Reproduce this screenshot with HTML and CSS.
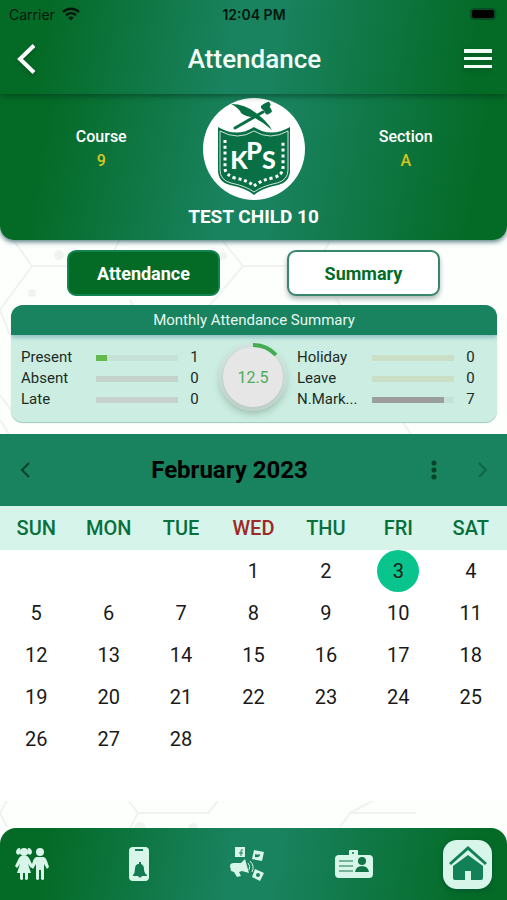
FILE: index.html
```html
<!DOCTYPE html>
<html lang="en">
<head>
  <meta charset="UTF-8">
  <title>Attendance</title>
  <meta name="viewport" content="width=device-width,initial-scale=1">
  <link rel="stylesheet" href="styles.css">
</head>
<body>

<!-- HEADER -->
<header class="header">
  <div class="statusbar">
    <div class="carrier">
      <span>Carrier</span>
      <svg width="18" height="14" viewBox="0 0 18 14" fill="none" stroke="#03170d">
        <path d="M1 5C5.500 .7 12.500 .7 17 5" stroke-width="2.500"/>
        <path d="M4 8.300C7 5.500 11 5.500 14 8.300" stroke-width="2.400"/>
        <path d="M6.300 10.600Q9 8.300 11.700 10.600L9 13.500Z" fill="#03170d" stroke="none"/>
      </svg>
    </div>
    <span class="clock">12:04 PM</span>
    <svg class="battery" width="30" height="14" viewBox="0 0 30 14">
      <rect x="1" y="1" width="26" height="12" rx="4" fill="#064d25"/>
      <rect x="3" y="3" width="22" height="8" rx="2" fill="#000"/>
      <path d="M28 5q2 2 0 4z" fill="#064d25"/>
    </svg>
  </div>
  <div class="titlebar">
    <button class="icon-btn" type="button" aria-label="Back">
      <svg width="19" height="30" viewBox="0 0 19 30" fill="none" stroke="#fff" stroke-width="4"><path d="M17 1.500L3 15L17 28.500"/></svg>
    </button>
    <h1>Attendance</h1>
    <button class="icon-btn" type="button" aria-label="Menu">
      <svg width="28" height="20" viewBox="0 0 28 20" fill="#f1fbf5"><path d="M0 0h28v4H0zM0 8h28v3H0zM0 16h28v3H0z"/></svg>
    </button>
  </div>
</header>

<!-- STUDENT -->
<section class="student">
  <div class="fact"><span>Course</span><b>9</b></div>
  <div class="child">
    <svg class="logo" width="102" height="102" viewBox="0 0 102 102">
      <circle cx="51" cy="51" r="51" fill="#fff"/>
      <!-- quill and hammer -->
      <path d="M28 6Q42 6 53 15Q64 23 69 32Q60 24 50 19Q43 19 38 15Q36 10 28 6Z" fill="#087044"/>
      <path d="M32 30L60 14" stroke="#087044" stroke-width="3" stroke-linecap="round"/>
      <rect x="60" y="5" width="7" height="11" rx="2" transform="rotate(-30 64 10)" fill="#087044"/>
      <rect x="59" y="5" width="10" height="5" rx="2" transform="rotate(-30 64 10)" fill="#087044"/>
      <!-- shield -->
      <path d="M15 29Q34 40 51 29Q68 40 87 29V72Q87 84 75 87Q59 90 51 97Q43 90 27 87Q15 84 15 72Z" fill="#087044"/>
      <path d="M17 33Q35 43 51 33Q67 43 85 33V72Q85 82 74 85Q59 88 51 94Q43 88 28 85Q17 82 17 72Z" fill="none" stroke="#fff" stroke-width=".8"/>
      <path d="M22 42V71Q23 77 32 80Q44 82 51 88Q58 82 70 80Q79 77 80 71V42" fill="none" stroke="#fff" stroke-width="3" stroke-dasharray="3 2.800"/>
      <g fill="#fff" font-family="Lato, sans-serif" font-weight="900" font-size="25" text-anchor="middle">
        <text x="36" y="71">K</text><text x="51" y="62">P</text><text x="66" y="71">S</text>
      </g>
    </svg>
    <h2>TEST CHILD 10</h2>
  </div>
  <div class="fact"><span>Section</span><b>A</b></div>
</section>

<main>
  <div class="tabs">
    <button class="tab active" type="button">Attendance</button>
    <button class="tab" type="button">Summary</button>
  </div>

  <!-- MONTHLY SUMMARY -->
  <section class="summary">
    <h3>Monthly Attendance Summary</h3>
    <div class="summary-body">
      <div class="stats">
        <span>Present</span><div class="bar"><i class="present" style="width:13%"></i></div><span class="num">1</span>
        <span>Absent</span><div class="bar gray"></div><span class="num">0</span>
        <span>Late</span><div class="bar gray"></div><span class="num">0</span>
      </div>
      <div class="dial">
        <svg width="60" height="60" viewBox="0 0 60 60" fill="none" stroke="#42ac50" stroke-width="4"><path d="M30 -2A32 32 0 0 1 53 8"/></svg>
        <span>12.5</span>
      </div>
      <div class="stats">
        <span>Holiday</span><div class="bar sand"></div><span class="num">0</span>
        <span>Leave</span><div class="bar sand"></div><span class="num">0</span>
        <span>N.Mark...</span><div class="bar"><i class="unmarked" style="width:88%"></i></div><span class="num">7</span>
      </div>
    </div>
  </section>

  <!-- CALENDAR -->
  <section class="calendar">
    <div class="month">
      <button class="icon-btn" type="button" aria-label="Previous month">
        <svg width="10" height="16" viewBox="0 0 10 16" fill="none" stroke="#09432a" stroke-width="2"><path d="M9 1L2 8L9 15"/></svg>
      </button>
      <h2>February 2023</h2>
      <button class="icon-btn" type="button" aria-label="More">
        <svg width="6" height="20" viewBox="0 0 6 20" fill="#09432a"><circle cx="3" cy="3" r="2.500"/><circle cx="3" cy="10" r="2.500"/><circle cx="3" cy="17" r="2.500"/></svg>
      </button>
      <button class="icon-btn" type="button" aria-label="Next month">
        <svg width="10" height="16" viewBox="0 0 10 16" fill="none" stroke="#106545" stroke-width="2"><path d="M1 1L8 8L1 15"/></svg>
      </button>
    </div>
    <table class="days">
      <thead>
        <tr><th>SUN</th><th>MON</th><th>TUE</th><th class="off">WED</th><th>THU</th><th>FRI</th><th>SAT</th></tr>
      </thead>
      <tbody>
        <tr><td></td><td></td><td></td><td>1</td><td>2</td><td><span class="today">3</span></td><td>4</td></tr>
        <tr><td>5</td><td>6</td><td>7</td><td>8</td><td>9</td><td>10</td><td>11</td></tr>
        <tr><td>12</td><td>13</td><td>14</td><td>15</td><td>16</td><td>17</td><td>18</td></tr>
        <tr><td>19</td><td>20</td><td>21</td><td>22</td><td>23</td><td>24</td><td>25</td></tr>
        <tr><td>26</td><td>27</td><td>28</td><td></td><td></td><td></td><td></td></tr>
      </tbody>
    </table>
  </section>
</main>

<!-- honeycomb behind the page -->
<svg class="pattern" width="507" height="900" viewBox="0 0 507 900" fill="none" stroke="#eff2f0" stroke-width="2">
  <path d="M12 238L32 266L0 310L-20 350M32 266H80M120 240L108 260M222 240L243 266L210 305M243 266H290M330 240L320 260M0 310L10 335M0 395L11 410M130 300L145 325M335 297L350 320M400 418L412 436M0 420L9 434"/>
  <path d="M7 801L0 813L7 827M129 801L138 813H208L218 801M138 813L130 828M340 827L350 813H416M350 813L376 799"/>
  <g fill="#f0f4f1" stroke="none"><circle cx="59" cy="255" r="5"/><circle cx="32" cy="293" r="4"/><circle cx="223" cy="256" r="4"/><circle cx="140" cy="828" r="6"/><circle cx="193" cy="828" r="5"/></g>
</svg>

<!-- BOTTOM NAV -->
<nav class="bottom-nav">
  <a href="#" aria-label="Children">
    <svg width="36" height="34" viewBox="0 0 36 34" fill="#d8f5e9">
      <circle cx="10" cy="5" r="4"/><path d="M6 1Q2 1 2 6L4 8L7 6ZM14 1Q18 1 18 6L16 8L13 6Z"/>
      <path d="M7 9H13Q15 10 16 13L19 19L17 21L14 17L17 26H14V32Q12 34 11 32V26H9V32Q8 34 6 32V26H3L6 17L3 21L1 19L4 13Q5 10 7 9Z"/>
      <circle cx="26" cy="5" r="4"/><path d="M22 10H30Q32 11 33 14L35 20L33 22L30 17V32Q29 34 27 32V23H25V32Q24 34 22 32V17L19 22L17 20L19 14Q20 11 22 10Z"/>
    </svg>
  </a>
  <a href="#" aria-label="Notifications">
    <svg width="20" height="34" viewBox="0 0 20 34">
      <rect width="20" height="34" rx="4" fill="#d8f5e9"/><path d="M6 3h8" stroke="#137a51" stroke-width="2"/>
      <path d="M4 28Q6 26 6 22Q6 17 10 17V15H12V17Q15 18 15 22Q15 26 18 28V29H4ZM9 29h4q-2 3-4 0" fill="#137a51"/>
    </svg>
  </a>
  <a href="#" aria-label="Social media">
    <svg width="36" height="36" viewBox="0 0 36 36" fill="#d8f5e9">
      <path d="M6 1H16V11H6ZM25 4L35 6L33 15L23 13ZM26 23L35 27L31 35L23 31Z"/>
      <path d="M12 10V5Q12 3 14 4M10 7h4" fill="none" stroke="#177f59"/>
      <path d="M1 20Q1 17 5 17L12 17L16 13L20 27L13 25L10 26L12 30L8 31L5 26L2 25Z"/>
      <path d="M19 17Q22 20 20 24M21 15Q26 20 23 26" fill="none" stroke="#d8f5e9"/>
      <circle cx="29" cy="29" r="2" fill="#177f59"/><path d="M26 8Q29 9 31 8Q31 12 26 11Z" fill="#177f59"/>
    </svg>
  </a>
  <a href="#" aria-label="Student card">
    <svg width="38" height="30" viewBox="0 0 38 30">
      <rect y="6" width="38" height="23" rx="4" fill="#d8f5e9"/><rect x="14" y="1" width="9" height="7" rx="1" fill="#d8f5e9"/>
      <path d="M4 12h14M4 17h14M4 22h14" stroke="#107447"/><circle cx="27" cy="12" r="4" fill="#107447"/><path d="M20 23q1-6 7-6t7 6z" fill="#107447"/><circle cx="18" cy="4" r="1" fill="#107447"/>
    </svg>
  </a>
  <a href="#" class="home" aria-label="Home">
    <svg width="38" height="36" viewBox="0 0 38 36" fill="#128158"><path d="M0 17L19 0L38 17L36 19L19 4L2 19ZM4 20L19 9L34 20V32Q34 34 32 34H22V25H16V34H6Q4 34 4 32Z"/></svg>
  </a>
</nav>

</body>
</html>
```
FILE: styles.css
```css
* { box-sizing: border-box; }
body { margin: 0; min-height: 100vh; display: flex; flex-direction: column; font-family: Roboto, sans-serif; background: #fdfffd; color: #1c2b25; }
h1, h2, h3 { margin: 0; }
svg { display: block; }
button { font-family: inherit; }
.header, .student, .bottom-nav { background: linear-gradient(100deg, #046b27 10%, #19825e 45%, #19825e 55%, #046b27 92%); }
.header { height: 94px; position: relative; box-shadow: 0 2px 6px rgba(0,50,25,0.6); }
.statusbar { display: grid; grid-template-columns: 1fr auto 1fr; align-items: center; height: 28px; padding: 0 8px 0 9px; font-family: Inter, sans-serif; font-size: 14px; color: #03170d; }
.carrier { display: flex; align-items: center; gap: 7px; }
.clock { font-weight: 600; }
.battery { justify-self: end; }
.titlebar { display: flex; align-items: center; justify-content: space-between; height: 62px; padding: 0 15px 0 17px; }
.titlebar h1 { padding-left: 9px; font-size: 26px; font-weight: 500; color: #f4fcf8; }
.icon-btn { border: 0; padding: 0; background: none; }
.titlebar svg { filter: drop-shadow(0 2px 2px rgba(0,50,20,0.4)); }

.student { display: grid; grid-template-columns: 1fr 150px 1fr; height: 146px; border-radius: 0 0 14px 14px; box-shadow: 0 2px 5px #557e82; color: #fff; }
.fact { display: flex; flex-direction: column; align-items: center; gap: 5px; padding-top: 33px; font-size: 16px; line-height: 19px; font-weight: 500; }
.fact:first-child { padding-left: 24px; }
.fact:last-child { padding-right: 24px; }
.fact b { color: #d7c520; font-weight: 500; }
.child { display: flex; flex-direction: column; align-items: center; padding-top: 4px; }
.child h2 { margin-top: 6px; font-size: 19px; line-height: 22px; font-weight: 700; }

.tabs { display: flex; justify-content: center; gap: 67px; padding: 10px 0 9px; }
.tab { width: 153px; height: 46px; border: 2px solid #38876a; border-radius: 9px; background: #fff; color: #046b27; font-size: 18px; font-weight: 700; box-shadow: 0 3px 5px #aab8b3; }
.tab.active { background: #046b27; color: #fff; border-color: #13834f; box-shadow: none; }

.summary { margin: 0 10px 12px 11px; height: 117px; overflow: hidden; border-radius: 12px; background: #cceee2; box-shadow: 0 1px 1px #9bc7b8; }
.summary h3 { height: 30px; background: #19825e; color: #e7f8f1; font-size: 15px; line-height: 31px; font-weight: 400; text-align: center; box-shadow: 0 2px 5px #83b5bb; }
.summary-body { display: grid; grid-template-columns: 188px 1fr 188px; padding: 12px 12px 0 10px; }
.stats { display: grid; grid-template-columns: 75px 82px 1fr; align-content: start; align-items: center; font-size: 15px; line-height: 21px; }
.bar { height: 6px; background: #c6e2d8; }
.bar.gray { background: #c5d3cc; }
.bar.sand { background: #cbdfc6; }
.bar i { display: block; height: 6px; }
.present { background: #65b94a; }
.unmarked { background: #9b9e9c; }
.num { text-align: center; padding-left: 2px; }
.dial { display: grid; place-items: center; justify-self: center; width: 60px; height: 60px; border-radius: 50%; background: #e6e6e6; box-shadow: 0 0 0 4px rgba(222,228,225,0.5), 0 4px 9px 2px #93b3a5; color: #4eac5a; font-size: 16px; }
.dial svg, .dial span { grid-area: 1 / 1; }
.dial svg { overflow: visible; }

.calendar { background: #fff; padding-bottom: 41px; }
.month { display: grid; grid-template-columns: 50px 1fr 50px 48px; align-items: center; justify-items: center; height: 72px; background: #19825e; }
.month h2 { font-size: 24px; font-weight: 700; color: #000; }
.days { width: 100%; border-collapse: collapse; table-layout: fixed; text-align: center; }
.days th { height: 44px; padding: 0; background: #d6f4e9; color: #08703d; font-size: 20px; font-weight: 500; }
.days th.off { color: #9c2828; }
.days td { height: 42px; padding: 0; font-size: 20px; color: #1a1a1a; }
.today { display: block; width: 42px; margin: 0 auto; border-radius: 50%; background: #09c58d; line-height: 42px; }

.pattern { position: absolute; top: 0; left: 0; width: 100%; z-index: -1; }
.bottom-nav { display: flex; align-items: center; justify-content: space-between; height: 72px; margin-top: auto; padding: 0 15px 0 14px; border-radius: 16px 16px 0 0; }
.bottom-nav a { display: flex; align-items: center; justify-content: center; width: 36px; }
.bottom-nav svg { flex: none; }
.bottom-nav .home { width: 49px; height: 49px; border-radius: 14px; background: #d8f5e9; box-shadow: 0 2px 5px #06562d; }
```
